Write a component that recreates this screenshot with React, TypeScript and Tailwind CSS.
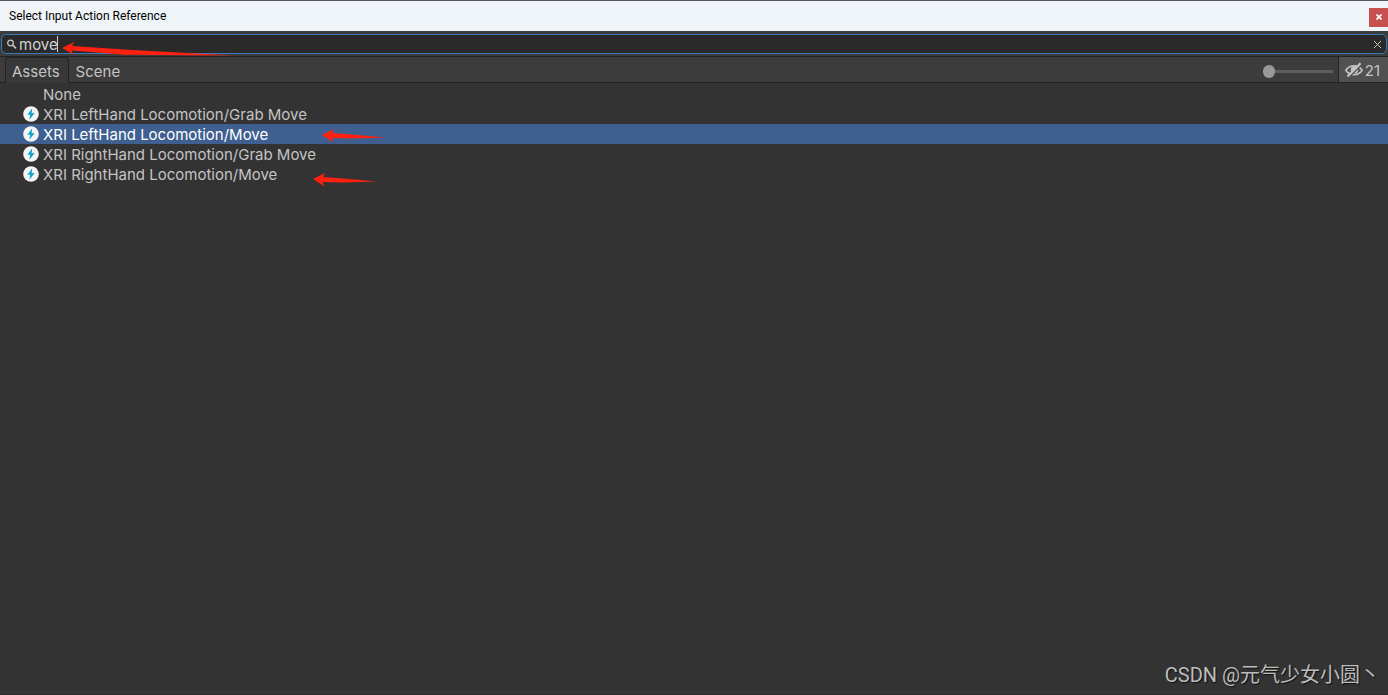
import { useState } from "react";

const results = [
  { name: "None", icon: false },
  { name: "XRI LeftHand Locomotion/Grab Move", icon: true },
  { name: "XRI LeftHand Locomotion/Move", icon: true },
  { name: "XRI RightHand Locomotion/Grab Move", icon: true },
  { name: "XRI RightHand Locomotion/Move", icon: true },
];

function ActionIcon() {
  return (
    <svg className="h-4 w-4 shrink-0" viewBox="0 0 16 16" aria-hidden="true">
      <circle cx="8" cy="8" r="7.8" fill="#f4f4f4" />
      <path d="M9.2 2.2 4.4 8.8h2.7l-.6 5L11.6 7H8.700z" fill="#10a5cf" />
    </svg>
  );
}

function SearchIcon() {
  return (
    <svg className="h-3 w-3 shrink-0" viewBox="0 0 12 12" fill="none" stroke="#c4c4c4" aria-hidden="true">
      <circle cx="4.5" cy="5" r="2.8" strokeWidth="1.3" />
      <path d="m6.7 7.2 3.3 3.1" strokeWidth="1.8" />
    </svg>
  );
}

function HiddenIcon() {
  return (
    <svg className="h-4 w-[18px] shrink-0" viewBox="0 0 18 16" fill="none" stroke="#c4c4c4" aria-hidden="true">
      <path d="M.8 8.3C3 5 6 3.7 9 3.7s6 1.3 8.2 4.6C15 11.6 12 12.7 9 12.7S3 11.6.8 8.3z" strokeWidth="1.6" />
      <circle cx="9.5" cy="7.8" r="3.7" fill="#c4c4c4" stroke="none" />
      <path d="M4.2 15.3 17 2.3" stroke="#515151" strokeWidth="1.3" />
      <path d="M2.5 14.500 15.500 1.200" strokeWidth="2.300" />
    </svg>
  );
}

function Arrow({ className, long = false }: { className: string; long?: boolean }) {
  return (
    <svg
      className={`pointer-events-none absolute h-[14px] ${className}`}
      viewBox={long ? "0 0 172 14" : "0 0 64 14"}
      fill="#ff2010"
      aria-hidden="true"
    >
      {long ? (
        <path d="M0 6 12 0l-2 4 60 4 102 5.500-110-.8L9.500 8.500l2 4z" />
      ) : (
        <path d="M0 6 12 0l-2 4 20 1.500 34 3L30 9.500 9.500 9l2 4.500z" />
      )}
    </svg>
  );
}

export default function App() {
  const [query, setQuery] = useState("move");
  const [selected, setSelected] = useState(2);

  return (
    <div className="relative flex min-h-screen flex-col border-b border-[#292929] bg-[#333333] font-['Inter',sans-serif] text-[15px] text-[#c4c4c4]">
      <header className="flex h-[31px] items-center justify-between border-t border-[#55555b] bg-[#eff4f9]">
        <h1 className="pl-[9px] font-['Roboto',sans-serif] text-xs text-black">Select Input Action Reference</h1>
        <button aria-label="Close" className="mt-[2px] flex h-[19px] w-[19px] items-center justify-center bg-[#c75050] text-white">
          <svg className="h-[6px] w-[6px]" viewBox="0 0 6 6" stroke="currentColor" strokeWidth="1.7" aria-hidden="true">
            <path d="m.5.500 5 5m0-5-5 5" />
          </svg>
        </button>
      </header>

      <div className="bg-[#3c3c3c] px-px pt-[3px] pb-[2px]">
        <div className="relative flex h-5 items-center rounded-[5px] border border-[#3a79bb] bg-[#2a2a2a] pr-1 pl-1">
          <SearchIcon />
          <input
            aria-label="Search"
            className="min-w-0 flex-1 bg-transparent pt-px pl-px leading-[18px] text-[#d2d2d2] outline-none"
            value={query}
            onChange={(e) => setQuery(e.target.value)}
          />
          <button aria-label="Clear search" onClick={() => setQuery("")}>
            <svg className="h-[9px] w-[9px]" viewBox="0 0 9 9" stroke="#c4c4c4" aria-hidden="true">
              <path d="m1 1 7 7m0-7-7 7" />
            </svg>
          </button>
          {query === "move" && <span className="absolute top-px left-[55px] h-4 w-px bg-[#d2d2d2]" />}
          <Arrow long className="top-[7px] left-[60px] w-[172px]" />
        </div>
      </div>

      <div className="flex h-[27px] border-y border-[#232323] bg-[#3c3c3c] pl-[5px]">
        <div role="tablist" className="flex">
          <button
            role="tab"
            aria-selected="true"
            className="-mb-px rounded-t-[3px] border-x border-t border-[#232323] bg-[#383838] pt-[3px] pr-2 pl-[6px]"
          >
            Assets
          </button>
          <button role="tab" aria-selected="false" className="px-[7px] pt-1">
            Scene
          </button>
        </div>
        <div className="ml-auto flex items-center">
          <input
            type="range"
            aria-label="Icon size"
            defaultValue={0}
            className="mt-[3px] mr-[5px] h-[13px] w-[70px] appearance-none bg-transparent [&::-webkit-slider-runnable-track]:h-[3px] [&::-webkit-slider-runnable-track]:bg-[#5e5e5e] [&::-webkit-slider-thumb]:-mt-[5px] [&::-webkit-slider-thumb]:h-[13px] [&::-webkit-slider-thumb]:w-3 [&::-webkit-slider-thumb]:appearance-none [&::-webkit-slider-thumb]:rounded-full [&::-webkit-slider-thumb]:bg-[#999999]"
          />
          <button
            aria-label="21 hidden packages"
            className="flex h-full items-center gap-[2px] border-l border-[#232323] bg-[#515151] pr-2 pl-[6px]"
          >
            <HiddenIcon />
            <span className="pt-[3px]">21</span>
          </button>
        </div>
      </div>

      <ul className="pt-px">
        {results.map((item, i) => (
          <li key={item.name}>
            <button
              onClick={() => setSelected(i)}
              className={`flex h-5 w-full items-center gap-1 pl-[23px] text-left leading-5 ${
                selected === i ? "bg-[#3e5f90] text-white" : ""
              }`}
            >
              {item.icon ? <ActionIcon /> : <span className="w-4" />}
              <span className="pt-px">{item.name}</span>
            </button>
          </li>
        ))}
      </ul>

      <Arrow className="top-[129px] left-[322px] w-[64px]" />
      <Arrow className="top-[173px] left-[313px] w-[64px]" />

      <footer className="mt-auto pr-2 pb-[5px] text-right font-['Roboto','Noto_Sans_CJK_SC',sans-serif] text-xl leading-7 text-[#bdbdbd] [text-shadow:1px_1px_1px_#111]">
        CSDN @元气少女小圆丶
      </footer>
    </div>
  );
}
